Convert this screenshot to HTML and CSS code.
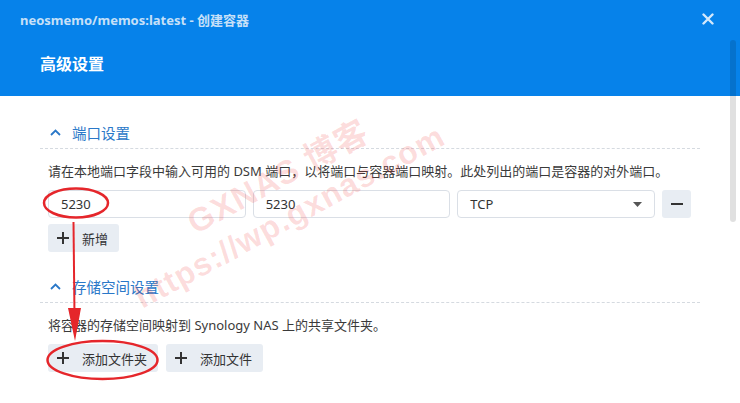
FILE: index.html
```html
<!DOCTYPE html>
<html lang="zh-CN">

<head>
    <meta charset="UTF-8">
    <meta name="viewport" content="width=device-width, initial-scale=1.0">
    <title>创建容器</title>

    <link rel="stylesheet" href="styles.css">
</head>

<body>
    <div class="dialog">
        <div class="dialog-header">
            <div class="title-bar">
                <span class="title">neosmemo/memos:latest - 创建容器</span>
                <svg class="close" width="12" height="12" viewBox="0 0 12 12">
                    <path d="M1.5 1.5 L10.5 10.5 M10.5 1.5 L1.5 10.5" stroke="#d3e8fb" stroke-width="2.4" stroke-linecap="round" />
                </svg>
            </div>
            <h1 class="step-title">高级设置</h1>
        </div>

        <div class="dialog-body">
            <div class="section">
                <div class="section-head">
                    <svg class="chevron" width="11" height="7" viewBox="0 0 11 7">
                        <path d="M1 6 L5.5 1.5 L10 6" fill="none" stroke="#2a78c8" stroke-width="1.8" />
                    </svg>
                    <span>端口设置</span>
                </div>
                <div class="section-body">
                    <p class="desc">请在本地端口字段中输入可用的 DSM 端口，以将端口与容器端口映射。此处列出的端口是容器的对外端口。</p>
                    <div class="port-row">
                        <div class="field">5230</div>
                        <div class="field">5230</div>
                        <div class="field select">
                            <span>TCP</span>
                            <svg width="9" height="5" viewBox="0 0 9 5"><path d="M0 0 L9 0 L4.5 5 Z" fill="#555" /></svg>
                        </div>
                        <button class="btn icon-btn">
                            <svg width="12" height="12" viewBox="0 0 12 12"><path d="M0 6 L12 6" stroke="#333" stroke-width="2" /></svg>
                        </button>
                    </div>
                    <div class="btn-row">
                        <button class="btn">
                            <svg width="12" height="12" viewBox="0 0 12 12"><path d="M0 6 L12 6 M6 0 L6 12" stroke="#333" stroke-width="2" /></svg>
                            新增
                        </button>
                    </div>
                </div>
            </div>

            <div class="section">
                <div class="section-head">
                    <svg class="chevron" width="11" height="7" viewBox="0 0 11 7">
                        <path d="M1 6 L5.5 1.5 L10 6" fill="none" stroke="#2a78c8" stroke-width="1.8" />
                    </svg>
                    <span>存储空间设置</span>
                </div>
                <div class="section-body">
                    <p class="desc">将容器的存储空间映射到 Synology NAS 上的共享文件夹。</p>
                    <div class="btn-row">
                        <button class="btn">
                            <svg width="12" height="12" viewBox="0 0 12 12"><path d="M0 6 L12 6 M6 0 L6 12" stroke="#333" stroke-width="2" /></svg>
                            添加文件夹
                        </button>
                        <button class="btn">
                            <svg width="12" height="12" viewBox="0 0 12 12"><path d="M0 6 L12 6 M6 0 L6 12" stroke="#333" stroke-width="2" /></svg>
                            添加文件
                        </button>
                    </div>
                </div>
            </div>
        </div>

        <div class="scrollbar"></div>
    </div>

    <!-- watermark + red marks drawn on top of the screenshot -->
    <div class="watermark">
        <div class="wm-name">GXNAS 博客</div>
        <div>https://wp.gxnas.com</div>
    </div>

    <svg class="marks" width="740" height="403" viewBox="0 0 740 403">
        <ellipse cx="76" cy="203" rx="32" ry="14.5" fill="none" stroke="#e5262b" stroke-width="2.5" />
        <ellipse cx="102.5" cy="360" rx="55" ry="19" fill="none" stroke="#e5262b" stroke-width="2.5" />
        <path d="M73.5 222 L74.5 316" stroke="#e5262b" stroke-width="2" />
        <path d="M68 308 L81 308 L75 341 Z" fill="#e5262b" />
    </svg>
</body>

</html>
```

FILE: styles.css
```css
body {
    margin: 0;
    background-color: #ffffff;
    font-family: "Noto Sans", "Noto Sans CJK SC", sans-serif;
    color: #333333;
}

.dialog {
    position: relative;
    width: 740px;
    height: 403px;
    overflow: hidden;
}

.dialog-header {
    background-color: #0682ea;
    height: 96px;
}

.title-bar {
    display: flex;
    align-items: center;
    justify-content: space-between;
    height: 38px;
    padding: 0 26px 0 20px;
}

.title {
    font-size: 13px;
    font-weight: bold;
    color: #c6e0f8;
}

.step-title {
    margin: 0;
    padding: 13px 0 0 40px;
    font-size: 16px;
    font-weight: bold;
    color: #ffffff;
}

.dialog-body {
    padding: 26px 40px 0 40px;
}

.section {
    margin-bottom: 24px;
}

.section-head {
    display: flex;
    align-items: center;
    gap: 11px;
    height: 20px;
    padding: 0 0 6px 10px;
    border-bottom: 1px dashed #d5dae0;
    font-size: 14.5px;
    color: #2a78c8;
}

.section-body {
    padding: 0 8px;
}

.desc {
    margin: 12px 0 0 0;
    font-size: 13px;
    line-height: 20px;
    color: #3a3a3a;
}

.port-row {
    display: grid;
    grid-template-columns: 1fr 1fr 1fr 29px;
    gap: 7px;
    margin-top: 9px;
    margin-right: 1px;
}

.field {
    display: flex;
    align-items: center;
    height: 26px;
    padding: 0 12px;
    border: 1px solid #dadfe6;
    border-radius: 4px;
    font-size: 13px;
    color: #333333;
}

.select {
    justify-content: space-between;
}

.btn-row {
    display: flex;
    gap: 8px;
    margin-top: 6px;
}

.section:last-child .btn-row {
    margin-top: 9px;
}

.btn {
    display: flex;
    align-items: center;
    gap: 13px;
    height: 28px;
    padding: 0 11px 0 9px;
    border: none;
    border-radius: 3px;
    background-color: #e8edf3;
    font-family: inherit;
    font-size: 13px;
    color: #333333;
}

.icon-btn {
    justify-content: center;
    padding: 0;
}

.scrollbar {
    position: absolute;
    top: 40px;
    right: 4px;
    width: 6px;
    height: 182px;
    border-radius: 3px;
    background-color: rgba(0, 0, 0, 0.12);
}

.close {
    display: block;
}

.watermark {
    position: absolute;
    left: 136px;
    top: 235px;
    transform: rotate(-28.5deg);
    transform-origin: 9px 60px;
    font-family: "Liberation Sans", "Noto Sans CJK SC", sans-serif;
    font-weight: bold;
    font-size: 32px;
    line-height: 40px;
    white-space: nowrap;
    color: rgba(240, 40, 40, 0.16);
    letter-spacing: 1px;
}

.wm-name {
    padding-left: 82px;
    font-size: 33px;
}

.marks {
    position: absolute;
    left: 0;
    top: 0;
}
```
